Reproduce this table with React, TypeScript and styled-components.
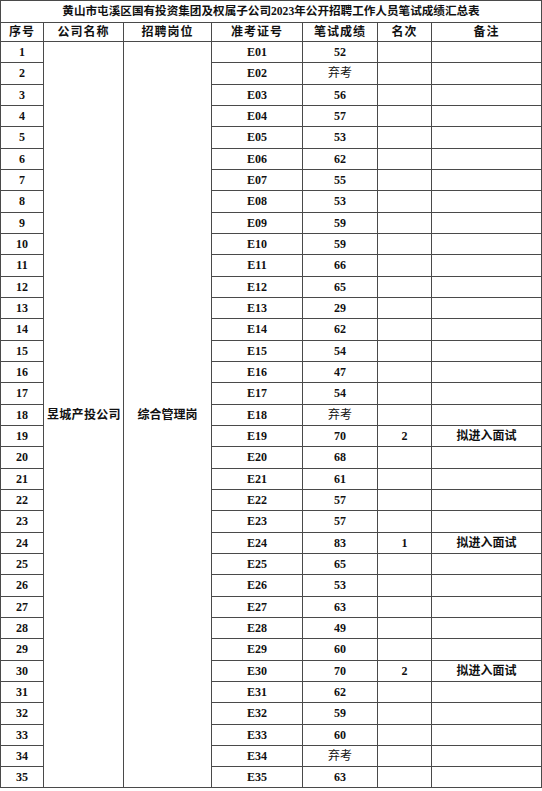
import React from "react";
import styled, { createGlobalStyle } from "styled-components";

const GlobalStyle = createGlobalStyle`
  html, body {
    margin: 0;
    padding: 0;
    background: #fff;
  }
  body {
    font-family: "Liberation Serif", "Noto Sans CJK SC", serif;
    color: #111;
  }
`;

const Sheet = styled.table`
  width: 541px;
  table-layout: fixed;
  border-collapse: collapse;
  font-size: 12px;
  font-weight: bold;
`;

const Cell = styled.td<{ $align?: string; $light?: boolean }>`
  border: 1px solid #4a4a4a;
  padding: 0;
  text-align: ${(p) => p.$align || "center"};
  vertical-align: middle;
  line-height: 1;
  white-space: nowrap;
  overflow: hidden;
  font-weight: ${(p) => (p.$light ? "normal" : "bold")};
`;

const TitleCell = styled(Cell)`
  font-size: 11.6px;
`;

const HeadCell = styled(Cell)`
  letter-spacing: 1px;
`;

const TitleRow = styled.tr`
  height: 22px;
`;

const HeadRow = styled.tr`
  height: 19px;
`;

const DataRow = styled.tr`
  height: 21.34px;
`;

const CompanyText = styled.span`
  padding-left: 3px;
  letter-spacing: 0.3px;
`;

const cols = [43, 80, 88, 91, 75, 54, 110];
const headers = ["序号", "公司名称", "招聘岗位", "准考证号", "笔试成绩", "名次", "备注"];

const scores = [
  "52", "弃考", "56", "57", "53", "62", "55", "53", "59", "59", "66", "65",
  "29", "62", "54", "47", "54", "弃考", "70", "68", "61", "57", "57", "83",
  "65", "53", "63", "49", "60", "70", "62", "59", "60", "弃考", "63",
];

const ranks: Record<number, string> = { 19: "2", 24: "1", 30: "2" };

export default function App() {
  return (
    <>
      <GlobalStyle />
      <Sheet>
        <colgroup>
          {cols.map((w, i) => (
            <col key={i} style={{ width: w }} />
          ))}
        </colgroup>
        <tbody>
          <TitleRow>
            <TitleCell colSpan={7}>黄山市屯溪区国有投资集团及权属子公司2023年公开招聘工作人员笔试成绩汇总表</TitleCell>
          </TitleRow>
          <HeadRow>
            {headers.map((h) => (
              <HeadCell key={h}>{h}</HeadCell>
            ))}
          </HeadRow>
          {scores.map((score, i) => {
            const n = i + 1;
            const id = "E" + String(n).padStart(2, "0");
            return (
              <DataRow key={n}>
                <Cell>{n}</Cell>
                {i === 0 && (
                  <>
                    <Cell rowSpan={35} $align="left">
                      <CompanyText>昱城产投公司</CompanyText>
                    </Cell>
                    <Cell rowSpan={35}>综合管理岗</Cell>
                  </>
                )}
                <Cell>{id}</Cell>
                <Cell $light={score === "弃考"}>{score}</Cell>
                <Cell>{ranks[n] || ""}</Cell>
                <Cell>{ranks[n] ? "拟进入面试" : ""}</Cell>
              </DataRow>
            );
          })}
        </tbody>
      </Sheet>
    </>
  );
}
